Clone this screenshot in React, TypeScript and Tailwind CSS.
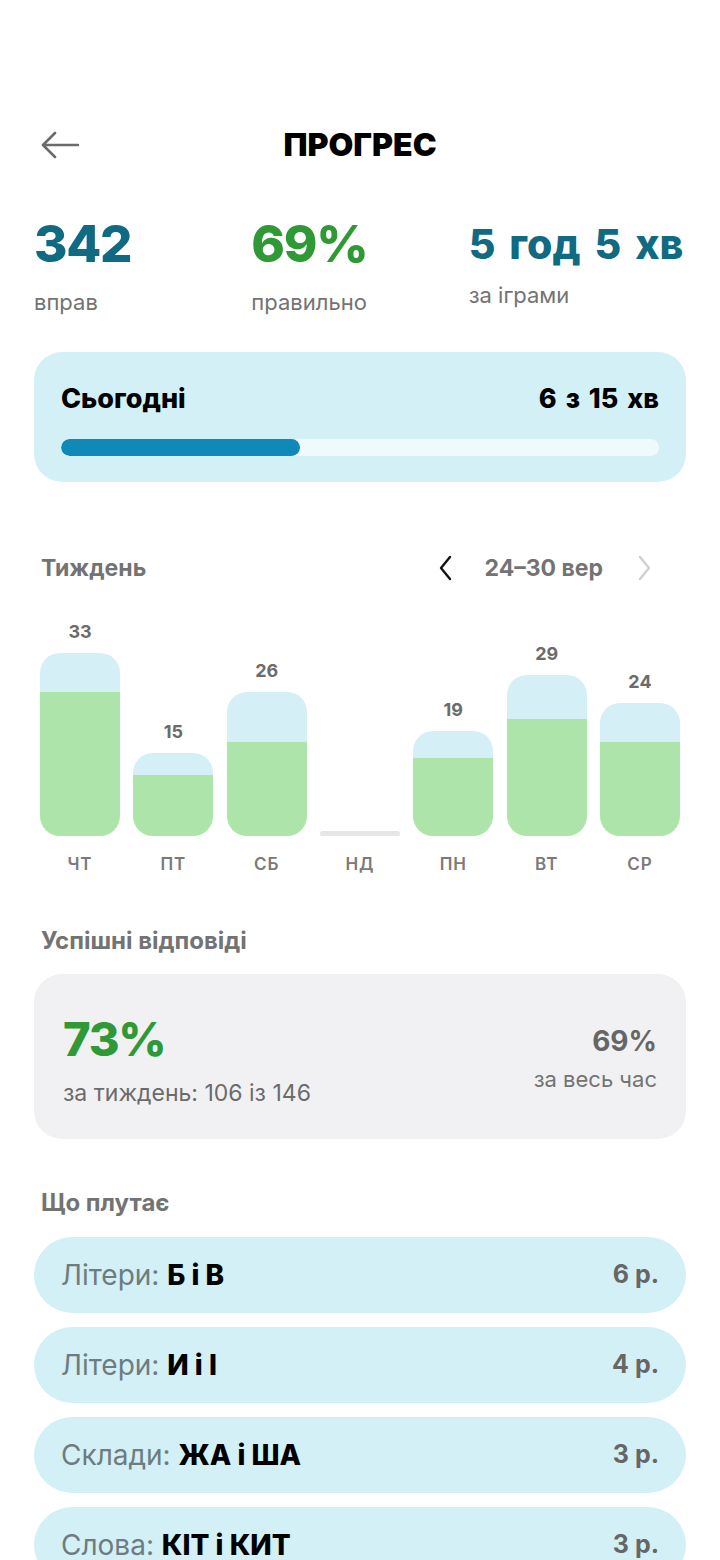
import React from 'react';

type Day = { label: string; total: number; correct: number };

const days: Day[] = [
  { label: 'ЧТ', total: 33, correct: 26 },
  { label: 'ПТ', total: 15, correct: 11 },
  { label: 'СБ', total: 26, correct: 17 },
  { label: 'НД', total: 0, correct: 0 },
  { label: 'ПН', total: 19, correct: 14 },
  { label: 'ВТ', total: 29, correct: 21 },
  { label: 'СР', total: 24, correct: 17 },
];

const confusions = [
  { kind: 'Літери:', pair: 'Б і В', times: '6 р.' },
  { kind: 'Літери:', pair: 'И і І', times: '4 р.' },
  { kind: 'Склади:', pair: 'ЖА і ША', times: '3 р.' },
  { kind: 'Слова:', pair: 'КІТ і КИТ', times: '3 р.' },
];

const UNIT = 5.55;

const ArrowLeft = () => (
  <svg width="38" height="28" viewBox="0 0 38 28" fill="none">
    <path d="M37 14H2M14 2L2 14L14 26" stroke="#6b6b6b" strokeWidth="2.6" strokeLinecap="round" strokeLinejoin="round" />
  </svg>
);

const Chevron = ({ dir, color }: { dir: 'left' | 'right'; color: string }) => (
  <svg width="14" height="26" viewBox="0 0 14 26" fill="none">
    <path
      d={dir === 'left' ? 'M12 2L3 13L12 24' : 'M2 2L11 13L2 24'}
      stroke={color}
      strokeWidth="2.4"
      strokeLinecap="round"
      strokeLinejoin="round"
    />
  </svg>
);

const Bar: React.FC<{ day: Day }> = ({ day }) => {
  if (day.total === 0) {
    return <div className="w-[80px] h-[5px] rounded-full bg-[#e6e6e8]" />;
  }
  const wrong = day.total - day.correct;
  return (
    <div className="flex flex-col items-center">
      <span className="text-[18px] leading-[22px] font-bold text-[#6b6b6b] mb-[10px]">{day.total}</span>
      <div className="w-[80px] rounded-[20px] overflow-hidden flex flex-col">
        <div className="bg-[#d5eff6]" style={{ height: wrong * UNIT }} />
        <div className="bg-[#ade4a9]" style={{ height: day.correct * UNIT }} />
      </div>
    </div>
  );
};

export default function App() {
  return (
    <div className="min-h-screen bg-white font-['Inter',sans-serif] pb-10">
      {/* Header */}
      <div className="mt-[120px] h-[50px] grid grid-cols-[1fr_auto_1fr] items-center px-[41px]">
        <ArrowLeft />
        <h1 className="text-[32px] font-black text-black">ПРОГРЕС</h1>
        <div />
      </div>

      {/* Stats */}
      <div className="mt-[48px] px-[34px] grid grid-cols-3">
        <div>
          <div className="h-[52px] text-[51px] leading-[52px] font-extrabold tracking-tight text-[#0f6a82]">342</div>
          <div className="mt-[20px] text-[22px] leading-[24px] text-[#737373]">вправ</div>
        </div>
        <div>
          <div className="h-[52px] text-[51px] leading-[52px] font-extrabold tracking-tight text-[#2f9a35]">69%</div>
          <div className="mt-[20px] text-[22px] leading-[24px] text-[#737373]">правильно</div>
        </div>
        <div>
          <div className="h-[52px] text-[41px] leading-[52px] font-extrabold whitespace-nowrap [word-spacing:5px] text-[#0f6a82]">5 год 5 хв</div>
          <div className="mt-[13px] text-[22px] leading-[24px] text-[#737373]">за іграми</div>
        </div>
      </div>

      {/* Today */}
      <div className="mt-[38px] mx-[34px] rounded-[28px] bg-[#d4f0f7] px-[27px] pt-[33px] pb-[26px]">
        <div className="flex items-center justify-between h-[28px]">
          <span className="text-[27px] font-extrabold text-black">Сьогодні</span>
          <span className="text-[27px] font-extrabold text-black [word-spacing:3px]">6 з 15 хв</span>
        </div>
        <div className="mt-[26px] h-[17px] rounded-full bg-[#eefafc] overflow-hidden">
          <div className="h-full w-[40%] rounded-full bg-[#0d8ab8]" />
        </div>
      </div>

      {/* Week */}
      <div className="mt-[66px] h-[40px] flex items-center justify-between pl-[41px] pr-[68px]">
        <span className="text-[23px] font-bold text-[#737373]">Тиждень</span>
        <div className="flex items-center">
          <Chevron dir="left" color="#111111" />
          <span className="ml-[33px] mr-[35px] text-[23px] font-bold text-[#737373]">24–30 вер</span>
          <Chevron dir="right" color="#d0d0d0" />
        </div>
      </div>

      <div className="h-[248px] px-[40px] flex items-end justify-between">
        {days.map((d) => (
          <Bar key={d.label} day={d} />
        ))}
      </div>
      <div className="mt-[18px] px-[40px] flex justify-between">
        {days.map((d) => (
          <span key={d.label} className="w-[80px] text-center text-[17px] leading-[20px] font-semibold tracking-wider text-[#7a7a7a]">
            {d.label}
          </span>
        ))}
      </div>

      {/* Success */}
      <div className="mt-[53px] h-[28px] flex items-center px-[41px]">
        <span className="text-[24px] font-bold text-[#737373]">Успішні відповіді</span>
      </div>
      <div className="mt-[19px] mx-[34px] rounded-[28px] bg-[#f1f1f3] px-[29px] pt-[39px] pb-[34px] flex items-start justify-between">
        <div>
          <div className="h-[52px] text-[47px] leading-[52px] font-extrabold tracking-tight text-[#2f9a35]">73%</div>
          <div className="mt-[16px] text-[23px] leading-[24px] text-[#6b6b6b]">за тиждень: 106 із 146</div>
        </div>
        <div className="mt-[12px] flex flex-col items-end">
          <div className="text-[28px] leading-[32px] font-bold text-[#666666]">69%</div>
          <div className="mt-[10px] text-[22px] leading-[24px] text-[#737373]">за весь час</div>
        </div>
      </div>

      {/* Confusions */}
      <div className="mt-[50px] h-[28px] flex items-center px-[41px]">
        <span className="text-[24px] font-bold text-[#737373]">Що плутає</span>
      </div>
      <div className="mt-[20px] mx-[34px] flex flex-col gap-[14px]">
        {confusions.map((c, i) => (
          <div key={i} className="h-[76px] rounded-full bg-[#d4f0f7] px-[27px] flex items-center justify-between">
            <span className="text-[28px]">
              <span className="text-[#6d7c80]">{c.kind} </span>
              <span className="font-extrabold text-black">{c.pair}</span>
            </span>
            <span className="text-[25px] font-bold text-[#666666]">{c.times}</span>
          </div>
        ))}
      </div>
    </div>
  );
}
